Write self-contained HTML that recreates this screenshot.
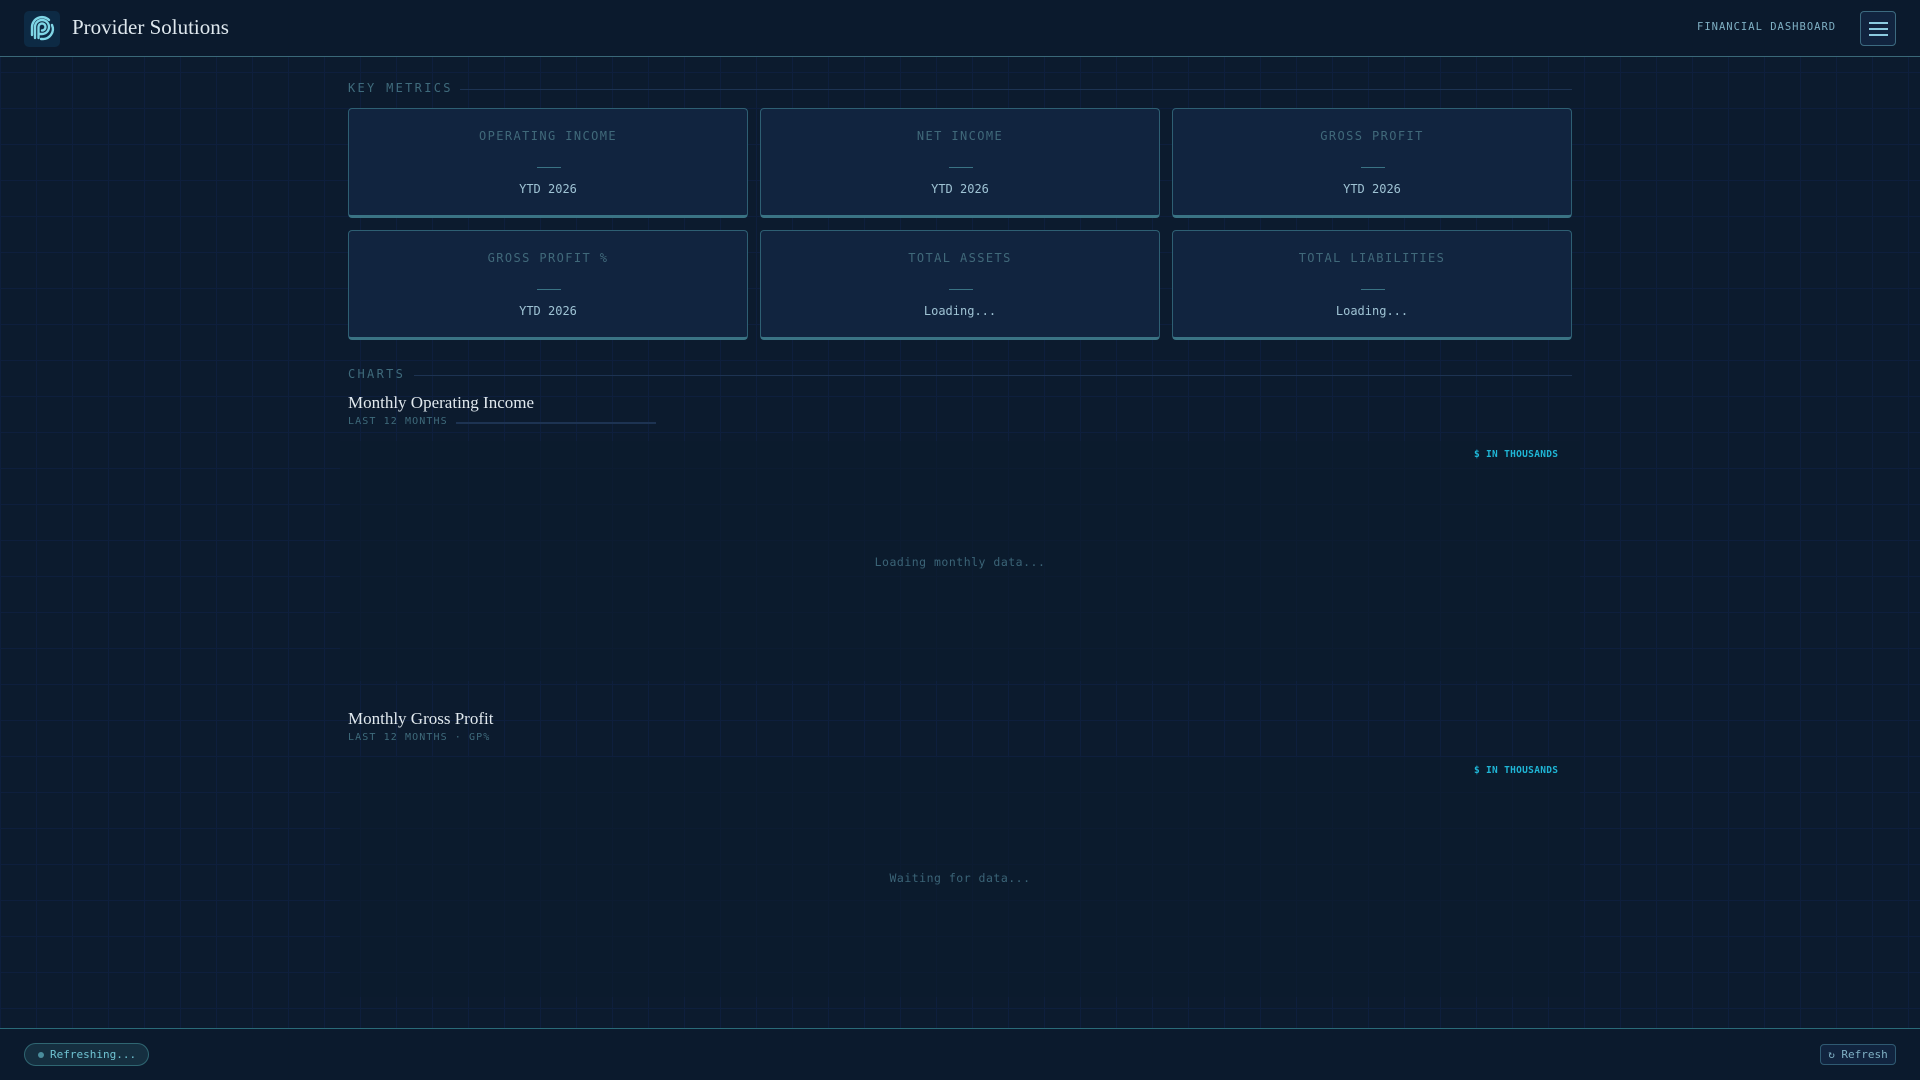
<!DOCTYPE html>
<html><head><meta charset="utf-8"><style>
*{margin:0;padding:0;box-sizing:border-box}
body{width:1920px;height:1080px;background:#0c1b2e;position:relative;overflow:hidden;font-family:"DejaVu Sans Mono","Liberation Mono",monospace}
.grid{position:absolute;left:0;top:57px;width:1920px;height:971px;background-image:linear-gradient(#11234a 1px,transparent 1px),linear-gradient(90deg,#11234a 1px,transparent 1px);background-size:36px 36px;background-position:0 -21px,0 0;opacity:.55}
.hdr{position:absolute;left:0;top:0;width:1920px;height:57px;background:#0b1a2d;border-bottom:1px solid #3a6878}
.logo{position:absolute;left:24px;top:11px;width:36px;height:36px;background:#0d2a44;border-radius:5px}
.title{position:absolute;left:72px;top:15px;font-family:"Liberation Serif",serif;font-size:21px;color:#dfe8ee}
.fd{position:absolute;left:1697px;top:21px;font-size:10.5px;letter-spacing:1px;color:#7fb0c4}
.menu{position:absolute;left:1860px;top:11px;width:36px;height:35px;border:1px solid #3c6a80;border-radius:4px;background:#11243f}
.menu i{position:absolute;left:8px;width:19px;height:2px;background:#8ccbe0}
.sec{position:absolute;left:348px;font-size:12px;letter-spacing:2.3px;color:#3f6b7c}
.secl{position:absolute;height:1px;background:#1d3352}
.card{position:absolute;width:400px;height:110px;background:#11243f;border:1px solid #2e5f73;border-bottom:3px solid #3a7384;border-radius:4px;text-align:center}
.card .l{position:absolute;top:20px;width:100%;font-size:12px;letter-spacing:1.4px;color:#40697a}
.card .d{position:absolute;top:58px;left:188px;width:24px;height:1px;background:#3a7384}
.card .v{position:absolute;top:73px;width:100%;font-size:12px;color:#9fc3d4}
.chart{position:absolute;left:340px;width:1240px;background:#0c1b2e;opacity:.7}
.ct{position:absolute;left:348px;font-family:"Liberation Serif",serif;font-size:17px;color:#e1e9ee}
.cs{position:absolute;left:348px;font-size:10px;letter-spacing:1.1px;color:#3f6b7c}
.th{position:absolute;left:1474px;font-size:9.5px;font-weight:bold;letter-spacing:.3px;color:#1fb6d6}
.ld{position:absolute;width:1224px;left:348px;text-align:center;font-size:11.5px;letter-spacing:.5px;color:#3b6477}
.ftr{position:absolute;left:0;top:1028px;width:1920px;height:52px;background:#0b1a2d;border-top:1px solid #2a6a78}
.pill{position:absolute;left:24px;top:1043px;width:125px;height:23px;border:1px solid #2f6672;border-radius:12px;background:#152f40;font-size:11px;color:#6fc3d2;padding:4px 0 0 25px}
.pill b{position:absolute;left:13px;top:8px;width:6px;height:6px;border-radius:50%;background:#4a8d9c}
.rf{position:absolute;left:1820px;top:1044px;width:76px;height:21px;border:1px solid #2f5a72;border-radius:4px;background:#11243f;font-size:11px;color:#7fb0c4;text-align:center;padding-top:3px}
</style></head><body>
<div class="grid"></div>
<div class="hdr">
<div class="logo"><svg width="36" height="36" viewBox="0 0 36 36" fill="none" stroke="#7fd6e6" stroke-width="2.4" stroke-linecap="round"><path d="M11 27V16a7 7 0 1 1 7 7h-3"/><path d="M14.5 27V16a3.5 3.5 0 1 1 3.5 3.5"/><path d="M8 24V16a10 10 0 0 1 17-7"/><path d="M28 14a10 10 0 0 1-10 14h-1"/></svg></div>
<div class="title">Provider Solutions</div>
<div class="fd">FINANCIAL DASHBOARD</div>
<div class="menu"><i style="top:10px"></i><i style="top:16px"></i><i style="top:22px"></i></div>
</div>
<div class="sec" style="top:81px">KEY METRICS</div><div class="secl" style="left:460px;width:1112px;top:89px"></div>
<div class="card" style="left:348px;top:108px"><div class="l">OPERATING INCOME</div><div class="d"></div><div class="v">YTD 2026</div></div>
<div class="card" style="left:760px;top:108px"><div class="l">NET INCOME</div><div class="d"></div><div class="v">YTD 2026</div></div>
<div class="card" style="left:1172px;top:108px"><div class="l">GROSS PROFIT</div><div class="d"></div><div class="v">YTD 2026</div></div>
<div class="card" style="left:348px;top:230px"><div class="l">GROSS PROFIT %</div><div class="d"></div><div class="v">YTD 2026</div></div>
<div class="card" style="left:760px;top:230px"><div class="l">TOTAL ASSETS</div><div class="d"></div><div class="v">Loading...</div></div>
<div class="card" style="left:1172px;top:230px"><div class="l">TOTAL LIABILITIES</div><div class="d"></div><div class="v">Loading...</div></div>
<div class="sec" style="top:367px">CHARTS</div><div class="secl" style="left:414px;width:1158px;top:375px"></div>
<div class="ct" style="top:393px">Monthly Operating Income</div>
<div class="cs" style="top:416px">LAST 12 MONTHS</div><div class="secl" style="left:456px;width:200px;top:422px;height:2px"></div>
<div class="chart" style="top:441px;height:240px"></div>
<div class="th" style="top:449px">$ IN THOUSANDS</div>
<div class="ld" style="top:555px">Loading monthly data...</div>
<div class="ct" style="top:709px">Monthly Gross Profit</div>
<div class="cs" style="top:732px">LAST 12 MONTHS · GP%</div>
<div class="chart" style="top:757px;height:240px"></div>
<div class="th" style="top:765px">$ IN THOUSANDS</div>
<div class="ld" style="top:871px">Waiting for data...</div>
<div class="ftr"></div>
<div class="pill"><b></b>Refreshing...</div>
<div class="rf">↻ Refresh</div>
</body></html>
